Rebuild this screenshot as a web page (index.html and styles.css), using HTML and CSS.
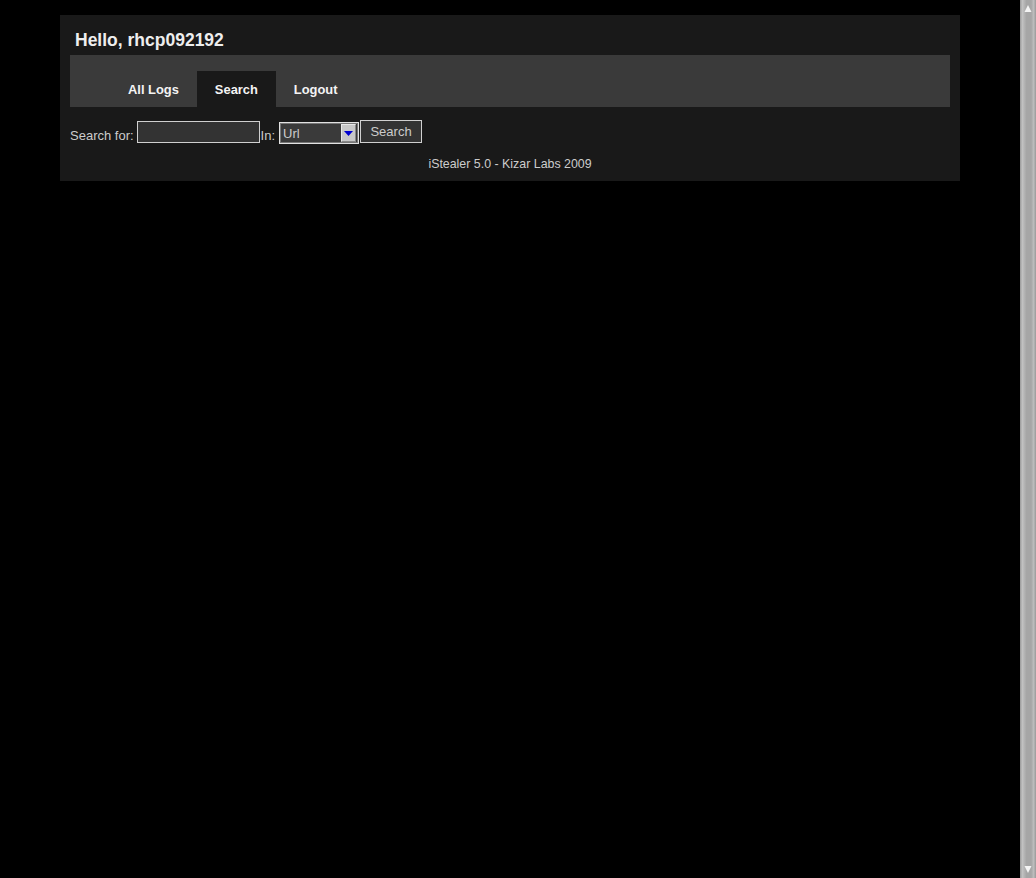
FILE: index.html
```html
<!DOCTYPE html>
<html lang="en">
<head>
  <meta http-equiv="Content-Type" content="text/html; charset=utf-8" />
  <title>iStealer 5.0</title>
  <link rel="stylesheet" href="styles.css">
</head>
<body>
  <div class="page">
    <div id="wrap">
      <h1 class="hello">Hello, rhcp092192</h1>
      <div class="nav">
        <a class="tab" href="#">All Logs</a>
        <a class="tab tab-active" href="#">Search</a>
        <a class="tab" href="#">Logout</a>
      </div>
      <form class="search-row" onsubmit="return false">
        <span class="lbl">Search for:</span>
        <input class="inp" type="text" name="q">
        <span class="lbl lbl-in">In:</span>
        <span class="sel">
          <select class="sel-box" name="field">
            <option>Url</option>
            <option>Login</option>
            <option>Password</option>
          </select>
          <span class="sel-btn">
            <svg width="9" height="5" viewBox="0 0 9 5"><path d="M0 0h9L4.5 5z" fill="#0000d0"/></svg>
          </span>
        </span>
        <button type="submit" class="btn">Search</button>
      </form>
      <div class="footer">iStealer 5.0 - Kizar Labs 2009</div>
    </div>
  </div>
  <div class="scrollbar">
    <svg class="arr" width="16" height="16" viewBox="0 0 16 16"><path d="M8 5L11.5 12H4.5z" fill="#f4f4f4"/></svg>
    <svg class="arr" width="16" height="16" viewBox="0 0 16 16"><path d="M8 11L11.5 4H4.5z" fill="#f4f4f4"/></svg>
  </div>
</body>
</html>
```

FILE: styles.css
```css
html, body {
  margin: 0;
  height: 100%;
}
body {
  display: flex;
  background: #000;
  font-family: "Liberation Sans", Arial, sans-serif;
  overflow: hidden;
}
.page {
  flex: 1;
}
#wrap {
  box-sizing: border-box;
  width: 900px;
  margin: 15px auto 0;
  padding: 0 10px 9px;
  background: #191919;
}
.hello {
  box-sizing: border-box;
  height: 40px;
  margin: 0;
  padding: 15px 5px 0;
  font-size: 17.5px;
  line-height: 20px;
  font-weight: bold;
  color: #eee;
}
.nav {
  display: flex;
  align-items: flex-end;
  height: 52px;
  padding-left: 40px;
  background: #3a3a3a;
}
.tab {
  height: 36px;
  padding: 0 18px;
  line-height: 37px;
  font-size: 12.9px;
  font-weight: bold;
  color: #f4f4f4;
  text-decoration: none;
}
.tab-active {
  background: #191919;
}
.search-row {
  display: flex;
  align-items: flex-start;
  margin: 13px 0 0;
  height: 24px;
}
.lbl {
  margin-top: 8px;
  font-size: 13px;
  line-height: 16px;
  color: #ccc;
}
.inp {
  box-sizing: border-box;
  width: 123px;
  height: 22px;
  margin: 1px 0 0 3px;
  border: 1px solid #d0d0d0;
  background: #333;
  color: #ccc;
}
.lbl-in {
  margin-left: 1px;
}
.sel {
  box-sizing: border-box;
  display: flex;
  align-items: center;
  width: 80px;
  height: 22px;
  margin: 2px 0 0 4px;
  border: 1px solid #e2e2e2;
  box-shadow: inset 0 0 0 1px #777;
  background: #3a3a3a;
}
.sel-box {
  flex: 1;
  min-width: 0;
  height: 18px;
  margin-left: 2px;
  padding: 0 1px;
  border: 0;
  appearance: none;
  background: transparent;
  font-family: "Liberation Sans", Arial, sans-serif;
  font-size: 13px;
  color: #ccc;
  outline: none;
}
.sel-btn {
  box-sizing: border-box;
  display: flex;
  align-items: center;
  justify-content: center;
  width: 15px;
  height: 18px;
  margin-right: 2px;
  border: 1px solid #e8e8e8;
  border-right-color: #888;
  border-bottom-color: #888;
  background: #c8c8c8;
}
.btn {
  box-sizing: border-box;
  width: 62px;
  height: 23px;
  margin-left: 1px;
  padding: 0;
  border: 1px solid #d0d0d0;
  background: #333;
  font-family: "Liberation Sans", Arial, sans-serif;
  font-size: 13px;
  color: #ccc;
}
.footer {
  margin-top: 12px;
  text-align: center;
  font-size: 12.4px;
  line-height: 16px;
  color: #ccc;
}
.scrollbar {
  display: flex;
  flex-direction: column;
  justify-content: space-between;
  width: 16px;
  height: 100%;
  background: linear-gradient(to right, #999 0, #c2c2c2 15%, #a6a6a6 40%, #a6a6a6 70%, #bdbdbd 85%, #999 100%);
}
.arr {
  display: block;
}
```
